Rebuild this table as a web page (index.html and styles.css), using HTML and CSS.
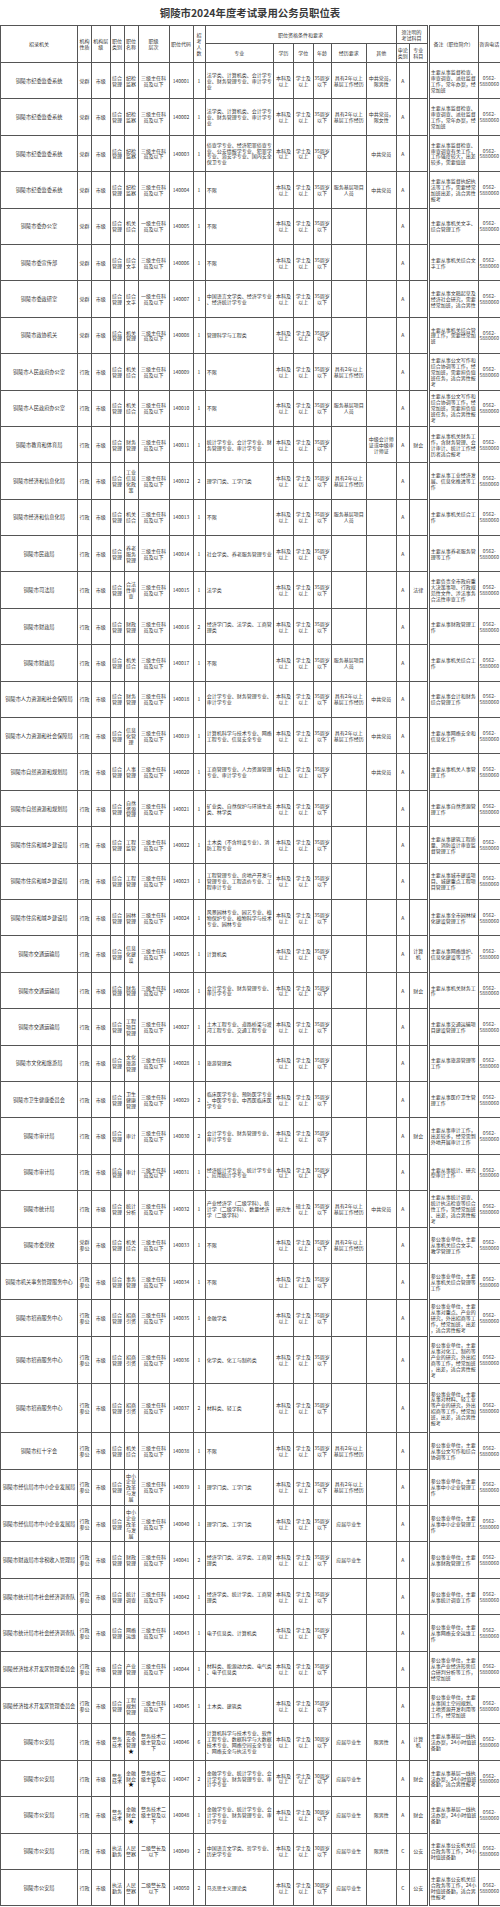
FILE: index.html
```html
<!DOCTYPE html>
<html lang="zh-CN">
<head>
<meta charset="utf-8">
<title>铜陵市2024年度考试录用公务员职位表</title>
<link rel="stylesheet" href="styles.css">
</head>
<body>
<div class="page">
<h1 class="title">铜陵市2024年度考试录用公务员职位表</h1>
<table class="grid">
<colgroup>
<col style="width:77px"><col style="width:14px"><col style="width:18.5px"><col style="width:14px"><col style="width:14px"><col style="width:31px"><col style="width:24px"><col style="width:12px"><col style="width:68.5px"><col style="width:20px"><col style="width:19.5px"><col style="width:18px"><col style="width:35.5px"><col style="width:29.5px"><col style="width:13.5px"><col style="width:18.5px"><col style="width:50px"><col style="width:22.5px">
</colgroup>
<thead>
<tr class="h1">
<th rowspan="2">招录机关</th><th rowspan="2">机构性质</th><th rowspan="2">机构层级</th><th rowspan="2">职位类别</th><th rowspan="2">职位名称</th><th rowspan="2">职级<br>层次</th><th rowspan="2">职位代码</th><th rowspan="2">招考人数</th><th colspan="6">职位资格条件和要求</th><th colspan="2">须注明的<br>考试科目</th><th rowspan="2" class="note">备注（职位简介）</th><th rowspan="2" class="telh">咨询电话</th>
</tr>
<tr class="h2">
<th>专业</th><th>学历</th><th>学位</th><th>年龄</th><th>经历要求</th><th>其他</th><th>申论类别</th><th>专业科目</th>
</tr>
</thead>
<tbody>
<tr><td class="org">铜陵市纪委监委系统</td><td>党群</td><td>市级</td><td>综合管理</td><td>纪检监察</td><td>三级主任科员及以下</td><td>140001</td><td>1</td><td class="l">法学类、计算机类、会计学专业、财务管理专业、审计学专业</td><td>本科及以上</td><td>学士及以上</td><td class="age">35周岁以下</td><td>具有2年以上基层工作经历</td><td>中共党员，限男性</td><td>A</td><td></td><td class="l note">主要从事监督检查、审查调查、派驻监督工作，常年办案，经常加班</td><td class="tel">0562-<br>5880060</td></tr>
<tr><td class="org">铜陵市纪委监委系统</td><td>党群</td><td>市级</td><td>综合管理</td><td>纪检监察</td><td>三级主任科员及以下</td><td>140002</td><td>1</td><td class="l">法学类、计算机类、会计学专业、财务管理专业、审计学专业</td><td>本科及以上</td><td>学士及以上</td><td class="age">35周岁以下</td><td>具有2年以上基层工作经历</td><td>中共党员，限女性</td><td>A</td><td></td><td class="l note">主要从事监督检查、审查调查、派驻监督工作，常年办案，经常加班</td><td class="tel">0562-<br>5880060</td></tr>
<tr><td class="org">铜陵市纪委监委系统</td><td>党群</td><td>市级</td><td>综合管理</td><td>纪检监察</td><td>三级主任科员及以下</td><td>140003</td><td>1</td><td class="l">侦查学专业、经济犯罪侦查专业、公安情报学专业、犯罪学专业、治安学专业、国内安全保卫专业</td><td>本科及以上</td><td>学士及以上</td><td class="age">35周岁以下</td><td></td><td>中共党员</td><td>A</td><td></td><td class="l note">主要从事监督检查、审查调查有关工作，工作强度较大，出差较多，需要值班</td><td class="tel">0562-<br>5880060</td></tr>
<tr><td class="org">铜陵市纪委监委系统</td><td>党群</td><td>市级</td><td>综合管理</td><td>纪检监察</td><td>三级主任科员及以下</td><td>140004</td><td>1</td><td class="l">不限</td><td>本科及以上</td><td>学士及以上</td><td class="age">35周岁以下</td><td>服务基层项目人员</td><td>中共党员</td><td>A</td><td></td><td class="l note">主要从事监督执纪执法等工作，需要经常加班出差，适合男性报考</td><td class="tel">0562-<br>5880060</td></tr>
<tr><td class="org">铜陵市委办公室</td><td>党群</td><td>市级</td><td>综合管理</td><td>机关综合</td><td>一级主任科员及以下</td><td>140005</td><td>1</td><td class="l">不限</td><td>本科及以上</td><td>学士及以上</td><td class="age">35周岁以下</td><td></td><td></td><td>A</td><td></td><td class="l note">主要从事机关文字、综合管理工作</td><td class="tel">0562-<br>5880060</td></tr>
<tr><td class="org">铜陵市委宣传部</td><td>党群</td><td>市级</td><td>综合管理</td><td>综合文字</td><td>三级主任科员及以下</td><td>140006</td><td>1</td><td class="l">不限</td><td>本科及以上</td><td>学士及以上</td><td class="age">35周岁以下</td><td></td><td></td><td>A</td><td></td><td class="l note">主要从事机关综合文字工作</td><td class="tel">0562-<br>5880060</td></tr>
<tr><td class="org">铜陵市委政研室</td><td>党群</td><td>市级</td><td>综合管理</td><td>综合文字</td><td>一级主任科员及以下</td><td>140007</td><td>1</td><td class="l">中国语言文学类、经济学专业、经济统计学专业</td><td>本科及以上</td><td>学士及以上</td><td class="age">35周岁以下</td><td></td><td></td><td>A</td><td></td><td class="l note">主要从事文稿起草及经济社会研究，需要经常加班，适合男性</td><td class="tel">0562-<br>5880060</td></tr>
<tr><td class="org">铜陵市政协机关</td><td>党群</td><td>市级</td><td>综合管理</td><td>机关管理</td><td>三级主任科员及以下</td><td>140008</td><td>1</td><td class="l">管理科学与工程类</td><td>本科及以上</td><td>学士及以上</td><td class="age">35周岁以下</td><td></td><td></td><td>A</td><td></td><td class="l note">主要从事机关综合管理工作，需要经常加班</td><td class="tel">0562-<br>5880060</td></tr>
<tr><td class="org">铜陵市人民政府办公室</td><td>行政</td><td>市级</td><td>综合管理</td><td>机关综合</td><td>三级主任科员及以下</td><td>140009</td><td>1</td><td class="l">不限</td><td>本科及以上</td><td>学士及以上</td><td class="age">35周岁以下</td><td>具有2年以上基层工作经历</td><td></td><td>A</td><td></td><td class="l note">主要从事公文写作和综合协调等工作，经常加班，需要担负值班任务，适合男性报考</td><td class="tel">0562-<br>5880060</td></tr>
<tr><td class="org">铜陵市人民政府办公室</td><td>行政</td><td>市级</td><td>综合管理</td><td>机关综合</td><td>三级主任科员及以下</td><td>140010</td><td>1</td><td class="l">不限</td><td>本科及以上</td><td>学士及以上</td><td class="age">35周岁以下</td><td>服务基层项目人员</td><td></td><td>A</td><td></td><td class="l note">主要从事公文写作和综合协调等工作，经常加班，需要担负值班任务，适合男性报考</td><td class="tel">0562-<br>5880060</td></tr>
<tr><td class="org">铜陵市教育和体育局</td><td>行政</td><td>市级</td><td>综合管理</td><td>财务管理</td><td>三级主任科员及以下</td><td>140011</td><td>1</td><td class="l">统计学专业、会计学专业、财务管理专业、审计学专业</td><td>本科及以上</td><td>学士及以上</td><td class="age">35周岁以下</td><td></td><td>中级会计师证或中级审计师证</td><td>A</td><td>财会</td><td class="l note">主要从事机关财务工作，含财务管理、会计审计、统计工作经历者适合报考</td><td class="tel">0562-<br>5880060</td></tr>
<tr><td class="org">铜陵市经济和信息化局</td><td>行政</td><td>市级</td><td>综合管理</td><td>工业信息化政策</td><td>三级主任科员及以下</td><td>140012</td><td>2</td><td class="l">理学门类、工学门类</td><td>本科及以上</td><td>学士及以上</td><td class="age">35周岁以下</td><td>具有2年以上基层工作经历</td><td></td><td>A</td><td></td><td class="l note">主要从事工业经济发展、信息化推进等工作</td><td class="tel">0562-<br>5880060</td></tr>
<tr><td class="org">铜陵市经济和信息化局</td><td>行政</td><td>市级</td><td>综合管理</td><td>机关综合</td><td>三级主任科员及以下</td><td>140013</td><td>1</td><td class="l">不限</td><td>本科及以上</td><td>学士及以上</td><td class="age">35周岁以下</td><td>服务基层项目人员</td><td></td><td>A</td><td></td><td class="l note">主要从事机关综合工作</td><td class="tel">0562-<br>5880060</td></tr>
<tr><td class="org">铜陵市民政局</td><td>行政</td><td>市级</td><td>综合管理</td><td>养老服务管理</td><td>三级主任科员及以下</td><td>140014</td><td>1</td><td class="l">社会学类、养老服务管理专业</td><td>本科及以上</td><td>学士及以上</td><td class="age">35周岁以下</td><td></td><td></td><td>A</td><td></td><td class="l note">主要从事养老服务管理等工作</td><td class="tel">0562-<br>5880060</td></tr>
<tr><td class="org">铜陵市司法局</td><td>行政</td><td>市级</td><td>综合管理</td><td>合法性审查</td><td>三级主任科员及以下</td><td>140015</td><td>1</td><td class="l">法学类</td><td>本科及以上</td><td>学士及以上</td><td class="age">35周岁以下</td><td></td><td></td><td>A</td><td>法律</td><td class="l note">主要负责全市政府重大决策事项、行政规范性文件、涉法事务合法性审查工作</td><td class="tel">0562-<br>5880060</td></tr>
<tr><td class="org">铜陵市财政局</td><td>行政</td><td>市级</td><td>综合管理</td><td>财政管理</td><td>三级主任科员及以下</td><td>140016</td><td>2</td><td class="l">经济学门类、法学类、工商管理类</td><td>本科及以上</td><td>学士及以上</td><td class="age">35周岁以下</td><td></td><td></td><td>A</td><td></td><td class="l note">主要从事财政管理工作</td><td class="tel">0562-<br>5880060</td></tr>
<tr><td class="org">铜陵市财政局</td><td>行政</td><td>市级</td><td>综合管理</td><td>机关综合</td><td>三级主任科员及以下</td><td>140017</td><td>1</td><td class="l">不限</td><td>本科及以上</td><td>学士及以上</td><td class="age">35周岁以下</td><td>服务基层项目人员</td><td></td><td>A</td><td></td><td class="l note">主要从事机关综合工作</td><td class="tel">0562-<br>5880060</td></tr>
<tr><td class="org">铜陵市人力资源和社会保障局</td><td>行政</td><td>市级</td><td>综合管理</td><td>财务管理</td><td>三级主任科员及以下</td><td>140018</td><td>1</td><td class="l">会计学专业、财务管理专业、审计学专业</td><td>本科及以上</td><td>学士及以上</td><td class="age">35周岁以下</td><td>具有2年以上基层工作经历</td><td>中共党员</td><td>A</td><td></td><td class="l note">主要从事会计和财务综合管理工作</td><td class="tel">0562-<br>5880060</td></tr>
<tr><td class="org">铜陵市人力资源和社会保障局</td><td>行政</td><td>市级</td><td>综合管理</td><td>信息化管理</td><td>三级主任科员及以下</td><td>140019</td><td>1</td><td class="l">计算机科学与技术专业、网络工程专业、信息安全专业</td><td>本科及以上</td><td>学士及以上</td><td class="age">35周岁以下</td><td>具有2年以上基层工作经历</td><td>中共党员</td><td>A</td><td></td><td class="l note">主要从事网络安全和信息化工作</td><td class="tel">0562-<br>5880060</td></tr>
<tr><td class="org">铜陵市自然资源和规划局</td><td>行政</td><td>市级</td><td>综合管理</td><td>人事管理</td><td>三级主任科员及以下</td><td>140020</td><td>1</td><td class="l">工商管理专业、人力资源管理专业、审计学专业</td><td>本科及以上</td><td>学士及以上</td><td class="age">35周岁以下</td><td></td><td>中共党员</td><td>A</td><td></td><td class="l note">主要从事机关人事管理工作</td><td class="tel">0562-<br>5880060</td></tr>
<tr><td class="org">铜陵市自然资源和规划局</td><td>行政</td><td>市级</td><td>综合管理</td><td>自然资源管理</td><td>三级主任科员及以下</td><td>140021</td><td>1</td><td class="l">矿业类、自然保护与环境生态类、林学类</td><td>本科及以上</td><td>学士及以上</td><td class="age">35周岁以下</td><td></td><td></td><td>A</td><td></td><td class="l note">主要从事自然资源管理工作</td><td class="tel">0562-<br>5880060</td></tr>
<tr><td class="org">铜陵市住房和城乡建设局</td><td>行政</td><td>市级</td><td>综合管理</td><td>工程监管</td><td>三级主任科员及以下</td><td>140022</td><td>1</td><td class="l">土木类（不含特设专业）、消防工程专业</td><td>本科及以上</td><td>学士及以上</td><td class="age">35周岁以下</td><td></td><td></td><td>A</td><td></td><td class="l note">主要从事建筑工程质量、消防设计审查监督管理工作</td><td class="tel">0562-<br>5880060</td></tr>
<tr><td class="org">铜陵市住房和城乡建设局</td><td>行政</td><td>市级</td><td>综合管理</td><td>工程管理</td><td>三级主任科员及以下</td><td>140023</td><td>1</td><td class="l">工程管理专业、房地产开发与管理专业、工程造价专业、工程审计专业</td><td>本科及以上</td><td>学士及以上</td><td class="age">35周岁以下</td><td></td><td></td><td>A</td><td></td><td class="l note">主要从事城市建设项目、城建重点工程项目管理工作</td><td class="tel">0562-<br>5880060</td></tr>
<tr><td class="org">铜陵市住房和城乡建设局</td><td>行政</td><td>市级</td><td>综合管理</td><td>园林管理</td><td>三级主任科员及以下</td><td>140024</td><td>1</td><td class="l">风景园林专业、园艺专业、植物保护专业、植物科学与技术专业、园林专业</td><td>本科及以上</td><td>学士及以上</td><td class="age">35周岁以下</td><td></td><td></td><td>A</td><td></td><td class="l note">主要从事全市园林绿化建设管理工作</td><td class="tel">0562-<br>5880060</td></tr>
<tr><td class="org">铜陵市交通运输局</td><td>行政</td><td>市级</td><td>综合管理</td><td>信息化建设</td><td>三级主任科员及以下</td><td>140025</td><td>1</td><td class="l">计算机类</td><td>本科及以上</td><td>学士及以上</td><td class="age">35周岁以下</td><td></td><td></td><td>A</td><td>计算机</td><td class="l note">主要从事网络维护、信息化建设等工作</td><td class="tel">0562-<br>5880060</td></tr>
<tr><td class="org">铜陵市交通运输局</td><td>行政</td><td>市级</td><td>综合管理</td><td>财务管理</td><td>三级主任科员及以下</td><td>140026</td><td>1</td><td class="l">会计学专业、财务管理专业、审计学专业</td><td>本科及以上</td><td>学士及以上</td><td class="age">35周岁以下</td><td></td><td></td><td>A</td><td>财会</td><td class="l note">主要从事机关财务工作</td><td class="tel">0562-<br>5880060</td></tr>
<tr><td class="org">铜陵市交通运输局</td><td>行政</td><td>市级</td><td>综合管理</td><td>工程项目管理</td><td>三级主任科员及以下</td><td>140027</td><td>1</td><td class="l">土木工程专业、道路桥梁与渡河工程专业、交通工程专业</td><td>本科及以上</td><td>学士及以上</td><td class="age">35周岁以下</td><td></td><td></td><td>A</td><td></td><td class="l note">主要从事交通运输项目建设管理工作</td><td class="tel">0562-<br>5880060</td></tr>
<tr><td class="org">铜陵市文化和旅游局</td><td>行政</td><td>市级</td><td>综合管理</td><td>文化旅游管理</td><td>三级主任科员及以下</td><td>140028</td><td>1</td><td class="l">旅游管理类</td><td>本科及以上</td><td>学士及以上</td><td class="age">35周岁以下</td><td></td><td></td><td>A</td><td></td><td class="l note">主要从事旅游管理等工作</td><td class="tel">0562-<br>5880060</td></tr>
<tr><td class="org">铜陵市卫生健康委员会</td><td>行政</td><td>市级</td><td>综合管理</td><td>卫生健康管理</td><td>三级主任科员及以下</td><td>140029</td><td>2</td><td class="l">临床医学专业、预防医学专业、中医学专业、中西医临床医学专业</td><td>本科及以上</td><td>学士及以上</td><td class="age">35周岁以下</td><td></td><td></td><td>A</td><td></td><td class="l note">主要从事医疗卫生管理工作</td><td class="tel">0562-<br>5880060</td></tr>
<tr><td class="org">铜陵市审计局</td><td>行政</td><td>市级</td><td>综合管理</td><td>审计</td><td>三级主任科员及以下</td><td>140030</td><td>2</td><td class="l">会计学专业、财务管理专业、审计学专业</td><td>本科及以上</td><td>学士及以上</td><td class="age">35周岁以下</td><td></td><td></td><td>A</td><td>财会</td><td class="l note">主要从事审计工作，出差较多，经常需到外地开展审计工作</td><td class="tel">0562-<br>5880060</td></tr>
<tr><td class="org">铜陵市审计局</td><td>行政</td><td>市级</td><td>综合管理</td><td>审计</td><td>三级主任科员及以下</td><td>140031</td><td>1</td><td class="l">经济统计学专业、统计学专业、应用统计学专业</td><td>本科及以上</td><td>学士及以上</td><td class="age">35周岁以下</td><td></td><td></td><td>A</td><td></td><td class="l note">主要从事统计、研究型审计工作</td><td class="tel">0562-<br>5880060</td></tr>
<tr><td class="org">铜陵市统计局</td><td>行政</td><td>市级</td><td>综合管理</td><td>统计分析</td><td>三级主任科员及以下</td><td>140032</td><td>1</td><td class="l">产业经济学（二级学科）、统计学（二级学科）、数量经济学（二级学科）</td><td>研究生</td><td>硕士及以上</td><td class="age">35周岁以下</td><td>具有2年以上基层工作经历</td><td>中共党员</td><td>A</td><td></td><td class="l note">主要从事统计调查、统计执法检查等综合性工作，需经常加班、出差，适合男性报考</td><td class="tel">0562-<br>5880060</td></tr>
<tr><td class="org">铜陵市委党校</td><td>党群参公</td><td>市级</td><td>综合管理</td><td>机关综合</td><td>三级主任科员及以下</td><td>140033</td><td>1</td><td class="l">不限</td><td>本科及以上</td><td>学士及以上</td><td class="age">35周岁以下</td><td>具有2年以上基层工作经历</td><td></td><td>A</td><td></td><td class="l note">参公事业单位，主要从事机关综合文字、教学管理工作</td><td class="tel">0562-<br>5880060</td></tr>
<tr><td class="org">铜陵市机关事务管理服务中心</td><td>行政参公</td><td>市级</td><td>综合管理</td><td>事务管理</td><td>三级主任科员及以下</td><td>140034</td><td>1</td><td class="l">不限</td><td>本科及以上</td><td>学士及以上</td><td class="age">35周岁以下</td><td></td><td></td><td>A</td><td></td><td class="l note">参公事业单位，主要从事机关综合管理等工作</td><td class="tel">0562-<br>5880060</td></tr>
<tr><td class="org">铜陵市招商服务中心</td><td>行政参公</td><td>市级</td><td>综合管理</td><td>招商引资</td><td>三级主任科员及以下</td><td>140035</td><td>1</td><td class="l">金融学类</td><td>本科及以上</td><td>学士及以上</td><td class="age">35周岁以下</td><td></td><td></td><td>A</td><td></td><td class="l note">参公事业单位，主要从事对重点、产业的研究，外出招商等工作，经常加班，出差，适合男性报考</td><td class="tel">0562-<br>5880060</td></tr>
<tr class="tall1"><td class="org">铜陵市招商服务中心</td><td>行政参公</td><td>市级</td><td>综合管理</td><td>招商引资</td><td>三级主任科员及以下</td><td>140036</td><td>1</td><td class="l">化学类、化工与制药类</td><td>本科及以上</td><td>学士及以上</td><td class="age">35周岁以下</td><td></td><td></td><td>A</td><td></td><td class="l note">参公事业单位，主要从事对化工、制药等产业的研究，外出招商等工作，经常加班，出差，适合男性报考</td><td class="tel">0562-<br>5880060</td></tr>
<tr class="tall2"><td class="org">铜陵市招商服务中心</td><td>行政参公</td><td>市级</td><td>综合管理</td><td>招商引资</td><td>三级主任科员及以下</td><td>140037</td><td>2</td><td class="l">材料类、轻工类</td><td>本科及以上</td><td>学士及以上</td><td class="age">35周岁以下</td><td></td><td></td><td>A</td><td></td><td class="l note">参公事业单位，主要从事对材料、轻工业等产业的研究，外出招商等工作，经常加班，出差，适合男性报考</td><td class="tel">0562-<br>5880060</td></tr>
<tr><td class="org">铜陵市红十字会</td><td>行政参公</td><td>市级</td><td>综合管理</td><td>机关综合</td><td>三级主任科员及以下</td><td>140038</td><td>1</td><td class="l">不限</td><td>本科及以上</td><td>学士及以上</td><td class="age">35周岁以下</td><td>具有2年以上基层工作经历</td><td></td><td>A</td><td></td><td class="l note">参公事业单位，主要从事公文写作和综合协调等工作</td><td class="tel">0562-<br>5880060</td></tr>
<tr><td class="org">铜陵市经信局市中小企业发展局</td><td>行政参公</td><td>市级</td><td>综合管理</td><td>中小企业改革与发展</td><td>三级主任科员及以下</td><td>140039</td><td>1</td><td class="l">理学门类、工学门类</td><td>本科及以上</td><td>学士及以上</td><td class="age">35周岁以下</td><td>具有2年以上基层工作经历</td><td></td><td>A</td><td></td><td class="l note">参公事业单位，主要从事中小企业管理工作</td><td class="tel">0562-<br>5880060</td></tr>
<tr><td class="org">铜陵市经信局市中小企业发展局</td><td>行政参公</td><td>市级</td><td>综合管理</td><td>中小企业改革与发展</td><td>三级主任科员及以下</td><td>140040</td><td>1</td><td class="l">理学门类、工学门类</td><td>本科及以上</td><td>学士及以上</td><td class="age">35周岁以下</td><td>应届毕业生</td><td></td><td>A</td><td></td><td class="l note">参公事业单位，主要从事中小企业管理工作</td><td class="tel">0562-<br>5880060</td></tr>
<tr><td class="org">铜陵市财政局市非税收入管理局</td><td>行政参公</td><td>市级</td><td>综合管理</td><td>财政管理</td><td>三级主任科员及以下</td><td>140041</td><td>2</td><td class="l">经济学门类、法学类、工商管理类</td><td>本科及以上</td><td>学士及以上</td><td class="age">35周岁以下</td><td>应届毕业生</td><td></td><td>A</td><td></td><td class="l note">参公事业单位，主要从事财政管理工作</td><td class="tel">0562-<br>5880060</td></tr>
<tr><td class="org">铜陵市统计局市社会经济调查队</td><td>行政参公</td><td>市级</td><td>综合管理</td><td>统计调查</td><td>三级主任科员及以下</td><td>140042</td><td>1</td><td class="l">经济学类、统计学类、工商管理类</td><td>本科及以上</td><td>学士及以上</td><td class="age">35周岁以下</td><td></td><td></td><td>A</td><td></td><td class="l note">参公事业单位，主要从事统计调查工作</td><td class="tel">0562-<br>5880060</td></tr>
<tr><td class="org">铜陵市统计局市社会经济调查队</td><td>行政参公</td><td>市级</td><td>综合管理</td><td>网络运维</td><td>三级主任科员及以下</td><td>140043</td><td>1</td><td class="l">电子信息类、计算机类</td><td>本科及以上</td><td>学士及以上</td><td class="age">35周岁以下</td><td></td><td></td><td>A</td><td></td><td class="l note">参公事业单位，主要从事网络安全运维工作</td><td class="tel">0562-<br>5880060</td></tr>
<tr><td class="org">铜陵经济技术开发区管理委员会</td><td>行政参公</td><td>市级</td><td>综合管理</td><td>产业管理</td><td>三级主任科员及以下</td><td>140044</td><td>1</td><td class="l">材料类、能源动力类、电气类、电子信息类</td><td>本科及以上</td><td>学士及以上</td><td class="age">35周岁以下</td><td></td><td></td><td>A</td><td></td><td class="l note">参公事业单位，主要从事产业经济形势综合研判分析等工作，经常加班</td><td class="tel">0562-<br>5880060</td></tr>
<tr><td class="org">铜陵经济技术开发区管理委员会</td><td>行政参公</td><td>市级</td><td>综合管理</td><td>工程规划管理</td><td>三级主任科员及以下</td><td>140045</td><td>1</td><td class="l">土木类、建筑类</td><td>本科及以上</td><td>学士及以上</td><td class="age">35周岁以下</td><td></td><td></td><td>A</td><td></td><td class="l note">参公事业单位，主要从事国土空间规划、土地资源开发利用等工作，经常加班</td><td class="tel">0562-<br>5880060</td></tr>
<tr><td class="org">铜陵市公安局</td><td>行政</td><td>市级</td><td>警务技术</td><td>网络安全管理<span class="star">★</span></td><td>警务技术二级主管及以下</td><td>140046</td><td>6</td><td class="l">计算机科学与技术专业、软件工程专业、数据科学与大数据技术专业、网络空间安全专业、网络安全与执法专业</td><td>本科及以上</td><td>学士及以上</td><td class="age">30周岁以下</td><td>应届毕业生</td><td>限男性</td><td>A</td><td>计算机</td><td class="l note">主要从事基层一线执法办案，24小时值班备勤</td><td class="tel">0562-<br>5880060</td></tr>
<tr><td class="org">铜陵市公安局</td><td>行政</td><td>市级</td><td>警务技术</td><td>金融财会<span class="star">★</span></td><td>警务技术二级主管及以下</td><td>140047</td><td>2</td><td class="l">金融学专业、统计学专业、会计学专业、财务管理专业、审计学专业</td><td>本科及以上</td><td>学士及以上</td><td class="age">30周岁以下</td><td>应届毕业生</td><td></td><td>A</td><td>财会</td><td class="l note">主要从事基层一线执法办案，24小时值班备勤，适合男性报考</td><td class="tel">0562-<br>5880060</td></tr>
<tr><td class="org">铜陵市公安局</td><td>行政</td><td>市级</td><td>警务技术</td><td>金融财会<span class="star">★</span></td><td>警务技术二级主管及以下</td><td>140048</td><td>1</td><td class="l">金融学专业、统计学专业、会计学专业、财务管理专业、审计学专业</td><td>本科及以上</td><td>学士及以上</td><td class="age">30周岁以下</td><td>应届毕业生</td><td>限男性</td><td>A</td><td>财会</td><td class="l note">主要从事基层一线执法办案，24小时值班备勤</td><td class="tel">0562-<br>5880060</td></tr>
<tr><td class="org">铜陵市公安局</td><td>行政</td><td>市级</td><td>执法勤务</td><td>人民警察</td><td>二级警长及以下</td><td>140049</td><td>2</td><td class="l">中国语言文学类、哲学专业、历史学专业</td><td>本科及以上</td><td>学士及以上</td><td class="age">30周岁以下</td><td>应届毕业生</td><td>限男性</td><td>C</td><td>公安</td><td class="l note">主要从事公安机关综合政务等工作，24小时值班备勤</td><td class="tel">0562-<br>5880060</td></tr>
<tr><td class="org">铜陵市公安局</td><td>行政</td><td>市级</td><td>执法勤务</td><td>人民警察</td><td>二级警长及以下</td><td>140050</td><td>2</td><td class="l">马克思主义理论类</td><td>本科及以上</td><td>学士及以上</td><td class="age">30周岁以下</td><td>应届毕业生</td><td></td><td>C</td><td>公安</td><td class="l note">主要从事公安机关综合政务等工作，24小时值班备勤，适合男性报考</td><td class="tel">0562-<br>5880060</td></tr>
</tbody>
</table>
</div>
</body>
</html>
```

FILE: styles.css
```css
html, body {
  margin: 0;
  padding: 0;
  background: #ffffff;
}

.page {
  width: 500px;
  font-family: "Noto Sans CJK SC", "Liberation Sans", sans-serif;
  color: #333333;
}

.title {
  margin: 0;
  height: 25px;
  line-height: 26px;
  font-size: 10.4px;
  font-weight: bold;
  text-align: center;
  color: #3a3a3a;
}

.grid {
  width: 500px;
  border-collapse: collapse;
  table-layout: fixed;
}

.grid th,
.grid td {
  border: 1px solid #555555;
  padding: 0 1px;
  font-size: 5px;
  line-height: 5.9px;
  font-weight: normal;
  text-align: center;
  vertical-align: middle;
  word-break: break-all;
  line-break: anywhere;
  overflow: hidden;
  color: #333333;
}

.grid .h1 { height: 18px; }
.grid .h2 { height: 19px; }

.grid tbody tr { height: 36.4px; }
.grid tbody tr.tall1 { height: 47.6px; }
.grid tbody tr.tall2 { height: 49px; }

.grid td.org {
  font-size: 5.2px;
}

.grid td.l {
  text-align: left;
  padding: 0 1.2px;
}

.grid td.age {
  padding: 0;
}

.grid .note {
  border-left: 3px double #555555;
}

.grid th.telh {
  padding: 0;
  white-space: nowrap;
}

.grid td.tel {
  padding: 0;
  white-space: nowrap;
  color: #444444;
}

.star {
  display: block;
  font-size: 6px;
  color: #111111;
}
```
